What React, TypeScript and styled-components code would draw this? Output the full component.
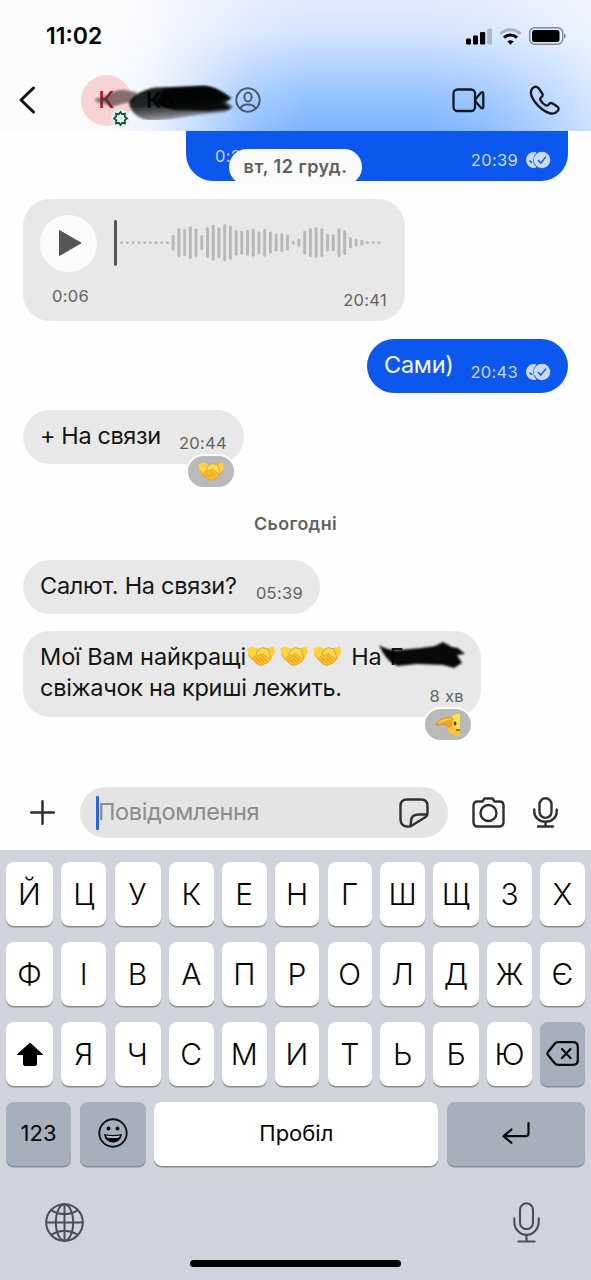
import React from 'react';
import styled, { createGlobalStyle } from 'styled-components';

const GlobalStyle = createGlobalStyle`
  * { box-sizing: border-box; }
  body { margin: 0; background: #fff; font-family: Inter, "Liberation Sans", sans-serif; }
  svg { display: block; flex: none; }
`;

const Phone = styled.div`
  width: 591px;
  height: 1280px;
  display: flex;
  flex-direction: column;
  overflow: hidden;
  background: #fefefe;
`;

const Header = styled.header`
  height: 131px;
  flex: none;
  background:
    linear-gradient(90deg, #fcfcfd 0%, #fcfcfd 17%, rgba(252, 252, 253, 0.86) 26%, rgba(252, 252, 253, 0.5) 35%, rgba(252, 252, 253, 0.18) 43%, rgba(252, 252, 253, 0) 52%),
    linear-gradient(270deg, rgba(252, 253, 255, 0.62) 0%, rgba(252, 253, 255, 0.4) 7%, rgba(252, 253, 255, 0.12) 18%, rgba(252, 253, 255, 0) 28%),
    linear-gradient(180deg, #e1e9fd 0%, #d5e4ff 25%, #b5d3ff 50%, #94c1ff 75%, #7db3ff 100%);
`;

const StatusBar = styled.div`
  height: 70px;
  display: flex;
  align-items: center;
  padding: 2px 25px 0 46px;
`;

const Clock = styled.div`
  flex: 1;
  font-size: 23px;
  font-weight: 600;
  letter-spacing: 0;
  color: #050505;
`;

const StatusIcons = styled.div`
  display: flex;
  align-items: center;
  gap: 7px;
`;

const NavBar = styled.div`
  height: 60px;
  display: flex;
  align-items: center;
  padding: 0 31px 0 18px;
`;

const Avatar = styled.div`
  position: relative;
  width: 51px;
  height: 51px;
  margin-left: 46px;
  border-radius: 50%;
  background: #f6d3d4;
  color: #b00f1c;
  font-size: 23px;
  font-weight: 500;
  display: flex;
  align-items: center;
  justify-content: center;
`;

const AvatarBadge = styled.div`
  position: absolute;
  left: 30px;
  top: 34px;
`;

const ContactName = styled.div`
  position: relative;
  width: 103px;
  padding-left: 14px;
  font-size: 22px;
  font-weight: 600;
  color: #000;
`;

const NameScribble = styled.svg`
  position: absolute;
  left: -38px;
  top: -5px;
`;

const NavActions = styled.div`
  display: flex;
  align-items: center;
  gap: 44px;
  margin-left: auto;
`;

const Chat = styled.main`
  height: 656px;
  flex: none;
  display: flex;
  flex-direction: column;
  align-items: flex-start;
  padding: 0 23px;
`;

const Bubble = styled.div<{ $own?: boolean; $w: number; $h: number; $top: number }>`
  position: relative;
  flex: none;
  width: ${p => p.$w}px;
  height: ${p => p.$h}px;
  margin-top: ${p => p.$top}px;
  align-self: ${p => (p.$own ? 'flex-end' : 'flex-start')};
  border-radius: 27px;
  padding: 0 17px;
  display: flex;
  justify-content: space-between;
  background: ${p => (p.$own ? '#0c57ee' : '#e8e8e8')};
  color: ${p => (p.$own ? '#f5f8ff' : '#161616')};
`;

const ClippedBubble = styled(Bubble)`
  border-radius: 0 0 27px 27px;
  padding: 0 17px 0 29px;
`;

const VoiceBubble = styled(Bubble)`
  flex-direction: column;
  justify-content: flex-start;
  padding: 15px 18px 0 17px;
`;

const VoiceTrack = styled.div`
  display: flex;
  align-items: center;
  gap: 16px;
  height: 58px;
`;

const PlayButton = styled.div`
  width: 57px;
  height: 57px;
  flex: none;
  border-radius: 50%;
  background: #fbfbfb;
  display: flex;
  align-items: center;
  justify-content: center;
  padding-left: 3px;
`;

const VoiceMeta = styled.div`
  display: flex;
  justify-content: space-between;
  padding: 14px 0 0 12px;
`;

const MessageText = styled.div<{ $spacing?: number }>`
  padding-top: 10px;
  font-size: 23.5px;
  line-height: 31px;
  letter-spacing: ${p => p.$spacing ?? -0.27}px;
  white-space: nowrap;
`;

const TextLine = styled.div<{ $spacing?: number }>`
  display: flex;
  align-items: center;
  height: 31px;
  letter-spacing: ${p => p.$spacing ?? -0.2}px;
`;

const EmojiRun = styled.span`
  display: flex;
  gap: 5px;
  margin: 0 10px 0 1px;
`;

const Redacted = styled.span`
  position: relative;
  margin-left: 8px;
`;

const WordScribble = styled.svg`
  position: absolute;
  left: -14px;
  top: -1px;
`;

const Meta = styled.div<{ $own?: boolean; $top?: number }>`
  display: flex;
  align-items: center;
  align-self: flex-start;
  gap: 7px;
  height: 20px;
  margin-top: ${p => p.$top ?? 0}px;
  font-size: 16.5px;
  letter-spacing: 0.3px;
  white-space: nowrap;
  color: ${p => (p.$own ? '#c9dafc' : '#636363')};
`;

const Reaction = styled.div`
  position: absolute;
  right: 8px;
  bottom: -25px;
  width: 50px;
  height: 35px;
  border: 2px solid #fefefe;
  border-radius: 18px;
  background: #b9b9b9;
  display: flex;
  align-items: center;
  justify-content: center;
`;

const DatePill = styled.div`
  position: absolute;
  left: 43px;
  top: 18px;
  width: 133px;
  height: 36px;
  border-radius: 18px;
  background: #fafafa;
  color: #5e5e5e;
  font-size: 18px;
  font-weight: 600;
  letter-spacing: 0.5px;
  line-height: 36px;
  text-align: center;
  white-space: nowrap;
`;

const DaySeparator = styled.div`
  align-self: center;
  flex: none;
  height: 24px;
  margin-top: 48px;
  font-size: 17.8px;
  font-weight: 600;
  line-height: 24px;
  letter-spacing: 0.4px;
  color: #626262;
`;

const Composer = styled.div`
  height: 63px;
  flex: none;
  display: flex;
  align-items: flex-start;
  padding-left: 30px;
`;

const ComposerIcon = styled.div<{ $left: number }>`
  height: 51px;
  display: flex;
  align-items: center;
  margin-left: ${p => p.$left}px;
`;

const InputField = styled.div`
  width: 368px;
  height: 51px;
  margin-left: 25px;
  border-radius: 26px;
  background: #e4e4e4;
  display: flex;
  align-items: center;
  padding: 0 19px 0 16px;
`;

const Caret = styled.span`
  width: 3px;
  height: 34px;
  border-radius: 1px;
  background: #2b62e3;
`;

const Placeholder = styled.span`
  flex: 1;
  padding-bottom: 2px;
  margin-left: -1px;
  font-size: 23.5px;
  letter-spacing: -0.35px;
  color: #8b8b8b;
`;

const Keyboard = styled.section`
  flex: 1;
  background: #d0d3dc;
  border-top: 1px solid #cbcdd3;
  padding: 11px 6px 0;
  display: flex;
  flex-direction: column;
`;

const KeyRow = styled.div`
  display: grid;
  grid-template-columns: 47px 45px 46px 45px 44.5px 44.5px 44.5px 44.5px 46px 44.5px 45px;
  justify-content: space-between;
  height: 64px;
  margin-bottom: 16px;
`;

const SpaceRow = styled(KeyRow)`
  grid-template-columns: 65px 66px 284px 138px;
`;

const Key = styled.div<{ $dark?: boolean; $small?: boolean }>`
  border-radius: 8px;
  background: ${p => (p.$dark ? '#a8afbc' : '#fff')};
  box-shadow: 0 1.5px 0 ${p => (p.$dark ? '#868b94' : '#898a8d')};
  color: #050505;
  font-size: ${p => (p.$small ? 22 : 30)}px;
  font-weight: ${p => (p.$small ? 400 : 350)};
  padding-bottom: ${p => (p.$small ? 2 : 1)}px;
  display: flex;
  align-items: center;
  justify-content: center;
`;

const SystemRow = styled.div`
  display: flex;
  justify-content: space-between;
  align-items: center;
  height: 46px;
  margin-top: 17px;
  padding: 0 45px 0 39px;
`;

const HomeIndicator = styled.div`
  width: 211px;
  height: 7px;
  margin: 15px auto 0;
  border-radius: 4px;
  background: #000;
`;

const Signal = () => (
  <svg width="26" height="17" viewBox="0 0 26 17">
    <rect x="0" y="10.5" width="5" height="6" rx="1.2" />
    <rect x="7" y="7.5" width="5" height="9" rx="1.2" />
    <rect x="14" y="4" width="5.2" height="12.5" rx="1.2" />
    <rect x="21" y="0.5" width="5" height="16" rx="1.2" fill="#a9b8d2" />
  </svg>
);

const Wifi = () => (
  <svg width="23" height="17" viewBox="0 0 23 17" fill="none" strokeWidth="3">
    <path d="M1.2 6C7 .3 16 .3 21.8 6" stroke="#a5b6d2" />
    <path d="M5 9.7c3.8-3.6 9.2-3.6 13 0" stroke="#050505" />
    <path d="M8.700 13.400q2.800-1.800 5.600 0l-2.800 3z" fill="#050505" stroke="#050505" strokeWidth="0.500" />
  </svg>
);

const Battery = () => (
  <svg width="37" height="18" viewBox="0 0 37 18">
    <rect x="0.7" y="0.7" width="33" height="16.6" rx="5" fill="none" stroke="#7d8797" strokeWidth="1.4" />
    <rect x="3" y="3" width="27.5" height="12" rx="2.5" />
    <path d="M35 6.5c2.400 1 2.400 4 0 5z" fill="#7d8797" />
  </svg>
);

const ReadMarks = () => (
  <svg width="26" height="18" viewBox="0 0 26 18">
    <path d="M9 1a8 8 0 1 0 0 16q1.500 0 2.500-.4Q4.500 9 11.500 1.400q-1-.4-2.500-.4z" fill="#c9dafc" />
    <path d="M4.500 9.500l2.500 2.500" stroke="#0c57ee" strokeWidth="1.600" fill="none" />
    <circle cx="17" cy="9" r="8.300" fill="#c9dafc" />
    <path d="M13.300 9.500l2.500 2.600 4.800-6" stroke="#0c57ee" strokeWidth="1.500" fill="none" strokeLinecap="round" />
  </svg>
);

const Handshake = ({ w = 28 }: { w?: number }) => (
  <svg width={w} height={w * 0.72} viewBox="0 0 56 40">
    <path d="M1 5l10-4 11 5 8-3 12 2L54 1l1 13-7 11-7 8-13 6-8-3-8-8L3 18z" fill="#fbc02c" />
    <path d="M1 5l10-4 11 5-3 9-7 10L3 18z" fill="#ffd240" />
    <path d="M54 1l1 13-7 11-6-9V5z" fill="#ffcf3a" />
    <path d="M20 10l10-7 12 3 6 18q-4 2-7-1l-10-8-8 4-5-3z" fill="#ffdc55" stroke="#dd9419" strokeWidth="1.500" strokeLinejoin="round" />
    <path d="M29 20l9 8M25 24l8 7M21 27l6 6" fill="none" stroke="#dc9017" strokeWidth="1.700" strokeLinecap="round" />
    <path d="M3 18l9 10 8 8 8 3 13-6 7-8" fill="none" stroke="#e9a11d" strokeWidth="2" strokeLinejoin="round" />
    <path d="M12 24l5-4M15 28l5-4M19 32l4-4" stroke="#dc9017" strokeWidth="1.600" strokeLinecap="round" />
  </svg>
);

const Salute = () => (
  <svg width="26" height="24" viewBox="0 0 26 24">
    <path d="M25 1C17 1 12 6 12 13c0 6 5 10 13 10z" fill="#fbc52b" />
    <path d="M25 1c-4 0-7 1-9 3l2 9 7 5z" fill="#ffe14b" />
    <path d="M1 11c4-5 10-7 16-6 2 1 1 3-1 4l1 3q-2 3-5 1-1-1-2-2l-6 1q-4 1-3-1z" fill="#f5a81d" stroke="#d88412" strokeWidth=".8" />
    <path d="M3 10q6-4 13-4" stroke="#ffd24b" strokeWidth="1.500" fill="none" />
    <ellipse cx="20" cy="10.500" rx="1.400" ry="2" fill="#503014" />
    <path d="M21 17h4" stroke="#70431a" strokeWidth="1.400" />
  </svg>
);

const waveHeights = [
  3, 3, 3, 3, 3, 3, 3, 3, 3, 16, 29, 27, 33, 29, 15, 31, 36, 31, 37, 34, 26, 24, 26, 28, 23, 28, 22, 18, 19, 16,
  4, 8, 24, 29, 31, 29, 18, 17, 29, 25, 11, 8, 6, 3, 3, 3,
];

const Waveform = () => (
  <svg width="268" height="48" viewBox="0 0 268 48">
    <rect x="1" y="0.700" width="3" height="46" rx="1.500" fill="#555" />
    {waveHeights.map((h, i) => (
      <rect key={i} x={7.300 + i * 5.716} y={23.700 - h / 2} width="2.900" height={h} rx="1.400" fill="#b7b7b7" />
    ))}
  </svg>
);

const Mic = ({ w, h, color, sw }: { w: number; h: number; color: string; sw: number }) => (
  <svg width={w} height={h} viewBox={`0 0 ${w} ${h}`} fill="none" stroke={color} strokeWidth={sw} strokeLinecap="round">
    <rect x={w / 2 - w * 0.24} y="1.300" width={w * 0.48} height={h * 0.63} rx={w * 0.24} />
    <path d={`M1.300 ${h * 0.4}v${h * 0.080}a${w / 2 - 1.300} ${h * 0.320} 0 0 0 ${w - 2.600} 0v${-h * 0.080}M${w / 2} ${h * 0.8}V${h - 1.500}M${w * 0.200} ${h - 1.500}H${w * 0.800}`} />
  </svg>
);

const rows = ['ЙЦУКЕНГШЩЗХ', 'ФІВАПРОЛДЖЄ', 'ЯЧСМИТЬБЮ'];

export default function App() {
  return (
    <Phone>
      <GlobalStyle />
      <Header>
        <StatusBar>
          <Clock>11:02</Clock>
          <StatusIcons>
            <Signal />
            <Wifi />
            <Battery />
          </StatusIcons>
        </StatusBar>
        <NavBar>
          <svg width="17" height="28" viewBox="0 0 17 28" fill="none" stroke="#111" strokeWidth="3" strokeLinecap="round" strokeLinejoin="round">
            <path d="M15.500 2L3 14l12.500 12" />
          </svg>
          <Avatar>
            К
            <AvatarBadge>
              <svg width="19" height="19" viewBox="0 0 19 19">
                <circle cx="9.500" cy="9.500" r="9.500" fill="#e6f0ec" />
                <path d="M9.500 3l1.700 2.200 2.800-.7-.3 2.900 2.300 2.100-2.300 1.900.3 3-2.800-.6-1.700 2.200-1.700-2.200-2.800.6.300-3L3 9.500l2.300-2.100L5 4.500l2.800.7z" fill="none" stroke="#174c3c" strokeWidth="1.700" />
              </svg>
            </AvatarBadge>
          </Avatar>
          <ContactName>
            Ко
            <NameScribble width="144" height="38" viewBox="0 0 144 38">
              <defs>
                <filter id="soft" x="-10%" y="-20%" width="120%" height="140%"><feGaussianBlur stdDeviation="0.9" /></filter>
                <linearGradient id="ink" x1="0" y1="0" x2="0.25" y2="1">
                  <stop offset="0" stopColor="#000" stopOpacity="0.900" />
                  <stop offset="0.550" stopColor="#000" stopOpacity="0.850" />
                  <stop offset="0.800" stopColor="#222" stopOpacity="0.700" />
                  <stop offset="1" stopColor="#555" stopOpacity="0.500" />
                </linearGradient>
              </defs>
              <path d="M1 17q6-1 14-5 6-4 14-4l14 2-2 9-14 3-10 3-8-4q-8 0-8-4z" fill="#49383a" opacity=".65" filter="url(#soft)" />
              <path d="M40 14Q50 7 62 5.500L110 4q12 1 20 7l8 5-6 4 7 5-8 5-28 3-33 5q-15 3-25-3-9-5-10-15z" fill="url(#ink)" filter="url(#soft)" />
              <path d="M70 7l41-3q12 2 24 12l-7 4 9 7-22 2-35-1-20-6z" fill="#000" opacity=".85" filter="url(#soft)" />
            </NameScribble>
          </ContactName>
          <svg width="26" height="26" viewBox="0 0 26 26" fill="none" stroke="#4b5a72" strokeWidth="2">
            <circle cx="13" cy="13" r="11.700" />
            <ellipse cx="13" cy="10" rx="3.700" ry="4.500" />
            <path d="M5.500 21.500q1.500-4 7.500-4t7.500 4" />
          </svg>
          <NavActions>
            <svg width="33" height="25" viewBox="0 0 33 25" fill="none" stroke="#101923" strokeWidth="2.300" strokeLinejoin="round">
              <rect x="1.500" y="1.500" width="21.500" height="21.500" rx="4" />
              <path d="M23.500 11l5.500-6.300q2.300-1.500 2.300 1v13q0 2.500-2.300 1l-5.500-6.200z" />
            </svg>
            <svg width="31" height="30" viewBox="0 0 31 30" fill="none" stroke="#101923" strokeWidth="2.300" strokeLinejoin="round">
              <path d="M3.300 3.500Q6.500.2 9.500 3l3.700 5.500q1.300 2.200-1 3.800-1.700 1.300-.6 3 2.200 3.500 5 5 1.700.9 3-.8 1.700-2.300 4-1l5 3.300q2.200 1.900-.2 4.400-3 3.500-8 2Q12.500 25.500 6 17q-6.500-8.700-2.700-13.500z" />
            </svg>
          </NavActions>
        </NavBar>
      </Header>

      <Chat>
        <ClippedBubble $own $w={382} $h={50} $top={0}>
          <Meta $own $top={15}>0:26</Meta>
          <Meta $own $top={19}>20:39<ReadMarks /></Meta>
          <DatePill>вт, 12 груд.</DatePill>
        </ClippedBubble>

        <VoiceBubble $w={382} $h={122} $top={18}>
          <VoiceTrack>
            <PlayButton>
              <svg width="24" height="28" viewBox="0 0 24 28"><path d="M1.500 1.500L23 14 1.500 26.500z" fill="#565656" stroke="#565656" strokeLinejoin="round" /></svg>
            </PlayButton>
            <Waveform />
          </VoiceTrack>
          <VoiceMeta>
            <Meta>0:06</Meta>
            <Meta $top={4}>20:41</Meta>
          </VoiceMeta>
        </VoiceBubble>

        <Bubble $own $w={201} $h={54} $top={18}>
          <MessageText>Сами)</MessageText>
          <Meta $own $top={23}>20:43<ReadMarks /></Meta>
        </Bubble>

        <Bubble $w={221} $h={54} $top={17}>
          <MessageText $spacing={-0.4}>+ На связи</MessageText>
          <Meta $top={23}>20:44</Meta>
          <Reaction><Handshake w={26} /></Reaction>
        </Bubble>

        <DaySeparator>Сьогодні</DaySeparator>

        <Bubble $w={297} $h={54} $top={24}>
          <MessageText>Салют. На связи?</MessageText>
          <Meta $top={23}>05:39</Meta>
        </Bubble>

        <Bubble $w={458} $h={86} $top={17}>
          <MessageText>
            <TextLine $spacing={-0.1}>
              Мої Вам найкращі
              <EmojiRun><Handshake /><Handshake /><Handshake /></EmojiRun>
              На
              <Redacted>
                Г
                <WordScribble width="92" height="34" viewBox="0 0 92 34">
                  <path d="M3 5q9 6 20 5l22-2 14-2 8-4 9 5 6 1 7 6-8 1 5 8-8 5-11-3-26-1-19 2Q11 23 3 5z" fill="#000" opacity=".96" filter="url(#soft)" />
                </WordScribble>
              </Redacted>
            </TextLine>
            <TextLine $spacing={-0.28}>свіжачок на криші лежить.</TextLine>
          </MessageText>
          <Meta $top={55}>8 хв</Meta>
          <Reaction><Salute /></Reaction>
        </Bubble>
      </Chat>

      <Composer>
        <ComposerIcon $left={0}>
          <svg width="25" height="25" viewBox="0 0 25 25" stroke="#2f2f2f" strokeWidth="2.500" strokeLinecap="round"><path d="M12.500 1.200v22.600M1.200 12.500h22.600" /></svg>
        </ComposerIcon>
        <InputField>
          <Caret />
          <Placeholder>Повідомлення</Placeholder>
          <svg width="30" height="30" viewBox="0 0 30 30" fill="none" stroke="#303030" strokeWidth="2.400" strokeLinejoin="round">
            <path d="M8 28.500Q1.500 28 1.500 21V8Q1.500 1.500 8 1.500h14q6.500 0 6.500 6.500v7.500q0 2-2 3.500L13 27.500q-2 1.500-5 1z" />
            <path d="M28 16.500h-8q-8 0-8 7 0 3-1 5" />
          </svg>
        </InputField>
        <ComposerIcon $left={24}>
          <svg width="33" height="31" viewBox="0 0 33 31" fill="none" stroke="#303030" strokeWidth="2.400" strokeLinejoin="round">
            <path d="M5.500 4.500h5l2-3h8l2 3h5q4 0 4 4V25q0 4.500-4 4.500h-22q-4 0-4-4.500V8.500q0-4 4-4z" />
            <circle cx="16.500" cy="16" r="8" />
          </svg>
        </ComposerIcon>
        <ComposerIcon $left={28}><Mic w={25} h={31} color="#303030" sw={2.4} /></ComposerIcon>
      </Composer>

      <Keyboard>
        {rows.slice(0, 2).map(r => (
          <KeyRow key={r}>{r.split('').map(c => <Key key={c}>{c}</Key>)}</KeyRow>
        ))}
        <KeyRow>
          <Key>
            <svg width="28" height="24" viewBox="0 0 28 24"><path d="M14 1L26.500 12.500h-6V22q0 1.500-1.500 1.500H9Q7.500 23.500 7.500 22v-9.500h-6z" stroke="#000" strokeLinejoin="round" /></svg>
          </Key>
          {rows[2].split('').map(c => <Key key={c}>{c}</Key>)}
          <Key $dark>
            <svg width="33" height="25" viewBox="0 0 33 25" fill="none" stroke="#0a0a0a" strokeWidth="2.200" strokeLinecap="round" strokeLinejoin="round">
              <path d="M12 1.200h15q4.800 0 4.800 4.800v13q0 4.800-4.800 4.800H12q-2 0-3.500-1.800L2 14q-1.300-1.500 0-3l6.500-8Q10 1.200 12 1.200zM16 8l8.500 9M24.500 8L16 17" />
            </svg>
          </Key>
        </KeyRow>
        <SpaceRow>
          <Key $dark $small>123</Key>
          <Key $dark $small>
            <svg width="30" height="30" viewBox="0 0 30 30">
              <circle cx="15" cy="15" r="13.700" fill="none" stroke="#111" strokeWidth="1.900" />
              <circle cx="10.500" cy="10.500" r="1.900" /><circle cx="19.500" cy="10.500" r="1.900" />
              <path d="M6 16q9 2 18 0-1.500 8.500-9 8.500T6 16z" />
              <path d="M8 17.500q7 1.500 14 0l-1 2q-6 1-12 0z" fill="#c5cad2" />
            </svg>
          </Key>
          <Key $small>Пробіл</Key>
          <Key $dark $small>
            <svg width="28" height="22" viewBox="0 0 28 22" fill="none" stroke="#0a0a0a" strokeWidth="2.200" strokeLinecap="round" strokeLinejoin="round">
              <path d="M26.500 1.200v10q0 3-3 3H2M9.500 7.500L1.500 14.200l8 6.600" />
            </svg>
          </Key>
        </SpaceRow>
        <SystemRow>
          <svg width="39" height="39" viewBox="0 0 39 39" fill="none" stroke="#4b4e57" strokeWidth="2">
            <circle cx="19.500" cy="19.500" r="18.300" />
            <ellipse cx="19.500" cy="19.500" rx="8.700" ry="18.300" />
            <path d="M19.500 1v37M1 19.500h37M6.500 7.500q13 7.500 26 0M6.500 31.500q13-7.500 26 0" />
          </svg>
          <Mic w={27} h={41} color="#4b4e57" sw={2.1} />
        </SystemRow>
        <HomeIndicator />
      </Keyboard>
    </Phone>
  );
}
